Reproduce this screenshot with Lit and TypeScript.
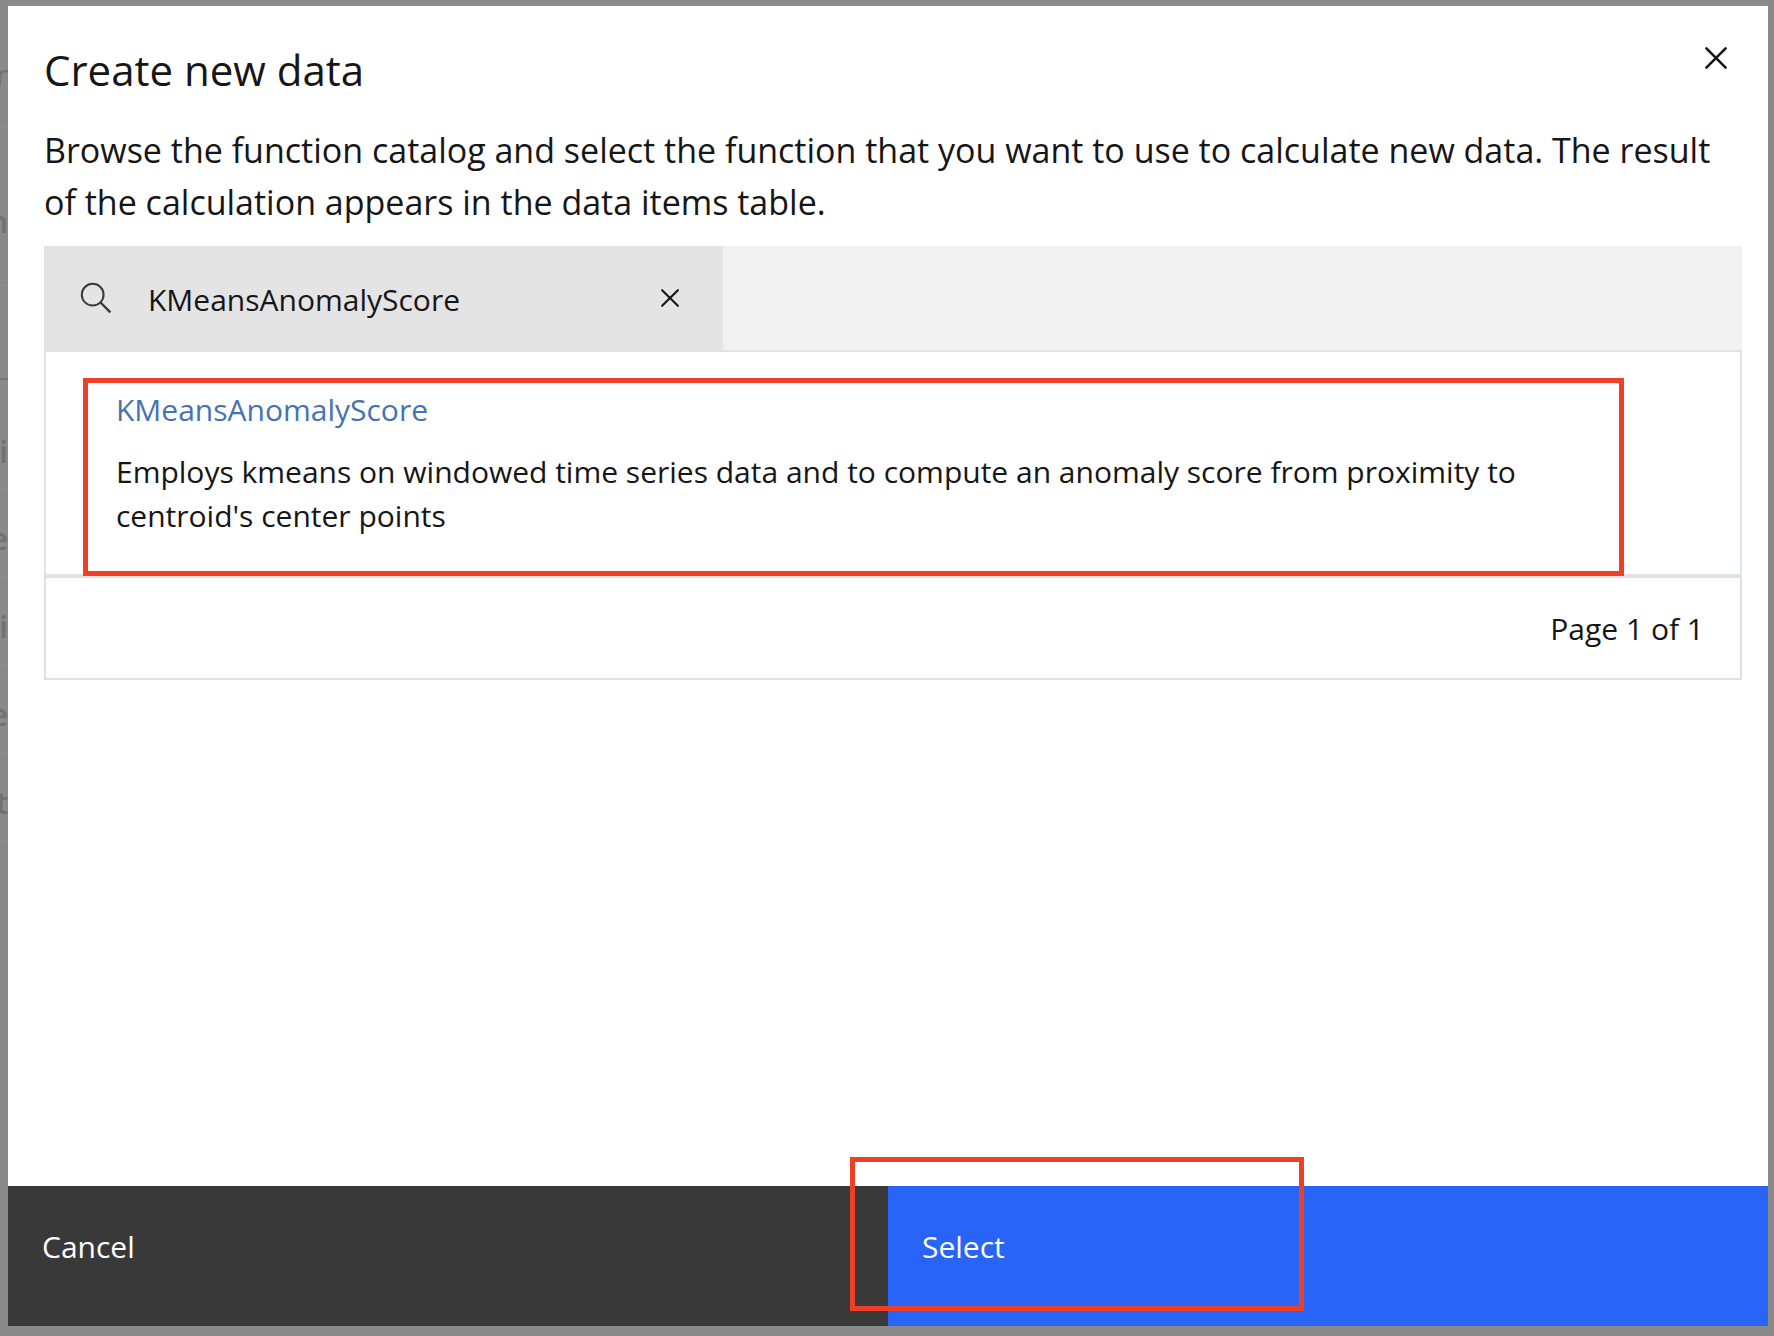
import { LitElement, html, css } from "lit";
import { customElement, state } from "lit/decorators.js";

interface CatalogFunction {
  name: string;
  description: string;
}

interface BackdropRow {
  text: string;
  size: string;
}

const CATALOG: CatalogFunction[] = [
  {
    name: "KMeansAnomalyScore",
    description:
      "Employs kmeans on windowed time series data and to compute an anomaly score from proximity to centroid's center points",
  },
];

/* Fragments of the dimmed page that show beside the dialog. */
const BACKDROP_ROWS: BackdropRow[] = [
  { text: "r", size: "head" },
  { text: "n", size: "tabs" },
  { text: "", size: "tools" },
  { text: "ri", size: "first" },
  { text: "e", size: "row" },
  { text: "ri", size: "row" },
  { text: "e", size: "row" },
  { text: "t", size: "row" },
];

@customElement("app-root")
export class AppRoot extends LitElement {
  @state() private query = "KMeansAnomalyScore";

  static styles = css`
    :host {
      display: block;
      font-family: "Open Sans", "Noto Sans", sans-serif;
      color: #161616;
    }
    * {
      box-sizing: border-box;
    }
    h1,
    p,
    ul {
      margin: 0;
      padding: 0;
      font-weight: 400;
    }
    ul {
      list-style: none;
    }
    button {
      border: 0;
      margin: 0;
      padding: 0;
      background: none;
      font: inherit;
      color: inherit;
      cursor: pointer;
    }
    svg {
      display: block;
    }
    .page {
      display: grid;
      grid-template-columns: 8px minmax(0, 1fr) 6px;
      min-height: 100vh;
      background: #8a8a8a;
    }
    .behind {
      overflow: hidden;
      color: #717171;
      font-size: 30px;
      font-weight: 600;
      line-height: 40px;
    }
    .behind-row {
      display: flex;
      justify-content: flex-end;
      align-items: center;
      height: 88px;
      border-bottom: 2px solid #868686;
    }
    .behind-row.head {
      height: 122px;
      padding-top: 30px;
      font-weight: 400;
    }
    .behind-row.tabs {
      height: 162px;
      padding-top: 40px;
    }
    .behind-row.tools {
      height: 96px;
      border-color: #787878;
    }
    .behind-row.first {
      height: 116px;
      padding-top: 30px;
    }
    .dialog {
      display: flex;
      flex-direction: column;
      margin: 6px 0 10px;
      background: #fff;
    }
    .header {
      display: flex;
      justify-content: space-between;
      align-items: flex-start;
      padding: 36px 36px 0;
    }
    .title {
      font-size: 42px;
      line-height: 56px;
    }
    .close {
      margin-right: 5px;
      padding: 5px 0;
    }
    .body {
      flex: 1;
      padding: 26px 26px 0 36px;
    }
    .intro {
      font-size: 34px;
      line-height: 52px;
      padding-bottom: 18px;
    }
    .toolbar {
      display: flex;
      background: #f2f2f2;
    }
    .search {
      display: flex;
      align-items: center;
      width: 40%;
      height: 104px;
      padding: 0 44px 0 36px;
      background: #e4e4e4;
    }
    .search-input {
      flex: 1;
      min-width: 0;
      height: 46px;
      margin-left: 36px;
      padding: 2px 0 0;
      border: 0;
      outline: 0;
      background: none;
      font: inherit;
      font-size: 30px;
      line-height: 44px;
      color: inherit;
    }
    .list {
      border: 2px solid #dfe3e6;
      padding: 36px 70px;
    }
    .item {
      position: relative;
      padding-right: 80px;
      font-size: 30px;
      line-height: 44px;
    }
    .item-name {
      color: #4672b4;
      text-decoration: none;
      display: block;
      margin-bottom: 18px;
    }
    .pagination {
      display: flex;
      justify-content: flex-end;
      align-items: center;
      height: 104px;
      padding: 2px 36px 0;
      border: 2px solid #e0e0e0;
      font-size: 30px;
      line-height: 44px;
    }
    .footer {
      position: relative;
      display: grid;
      grid-template-columns: 1fr 1fr;
      height: 140px;
    }
    .action {
      padding: 0 34px 18px;
      text-align: left;
      font-size: 30px;
      line-height: 44px;
      color: #fff;
    }
    .cancel {
      background: #393939;
    }
    .select {
      background: #2864f8;
    }
    .marker {
      position: absolute;
      border: 5px solid #ee4027;
      pointer-events: none;
    }
    .marker-item {
      inset: -10px 46px -38px -33px;
    }
    .marker-select {
      top: -29px;
      bottom: 15px;
      left: calc(50% - 38px);
      width: 454px;
    }
  `;

  private onInput(event: Event) {
    this.query = (event.target as HTMLInputElement).value;
  }

  private clearQuery() {
    this.query = "";
  }

  private renderCross(size: number) {
    return html`<svg width=${size} height=${size} viewBox="0 0 22 22" aria-hidden="true">
      <path d="M1.4 1.4 20.6 20.6M20.6 1.4 1.4 20.6" fill="none" stroke="#161616" stroke-width="2.6" stroke-linecap="round" />
    </svg>`;
  }

  render() {
    const matches = CATALOG.filter((fn) => fn.name.toLowerCase().includes(this.query.toLowerCase()));
    return html`
      <div class="page">
        <div class="behind" aria-hidden="true">
          ${BACKDROP_ROWS.map((row) => html`<div class="behind-row ${row.size}">${row.text}</div>`)}
        </div>
        <main class="dialog" role="dialog" aria-labelledby="title">
          <header class="header">
            <h1 class="title" id="title">Create new data</h1>
            <button class="close" type="button" aria-label="Close">${this.renderCross(22)}</button>
          </header>
          <div class="body">
            <p class="intro">
              Browse the function catalog and select the function that you want to use to calculate new data. The
              result of the calculation appears in the data items table.
            </p>
            <div class="toolbar">
              <div class="search" role="search">
                <svg width="32" height="32" viewBox="0 0 32 32" aria-hidden="true">
                  <circle cx="12.7" cy="12.7" r="10.9" fill="none" stroke="#393939" stroke-width="2" />
                  <path d="M20.5 20.5 30.4 30.4" fill="none" stroke="#393939" stroke-width="2.4" />
                </svg>
                <input
                  class="search-input"
                  type="text"
                  aria-label="Search functions"
                  .value=${this.query}
                  @input=${this.onInput}
                />
                <button type="button" aria-label="Clear search" @click=${this.clearQuery}>
                  ${this.renderCross(18)}
                </button>
              </div>
            </div>
            <ul class="list">
              ${matches.map(
                (fn) => html`<li class="item">
                  <a class="item-name" href="#${fn.name}">${fn.name}</a>
                  <p>${fn.description}</p>
                  <div class="marker marker-item"></div>
                </li>`
              )}
            </ul>
            <div class="pagination">Page 1 of 1</div>
          </div>
          <footer class="footer">
            <button class="action cancel" type="button">Cancel</button>
            <button class="action select" type="button">Select</button>
            <div class="marker marker-select"></div>
          </footer>
        </main>
      </div>
    `;
  }
}
